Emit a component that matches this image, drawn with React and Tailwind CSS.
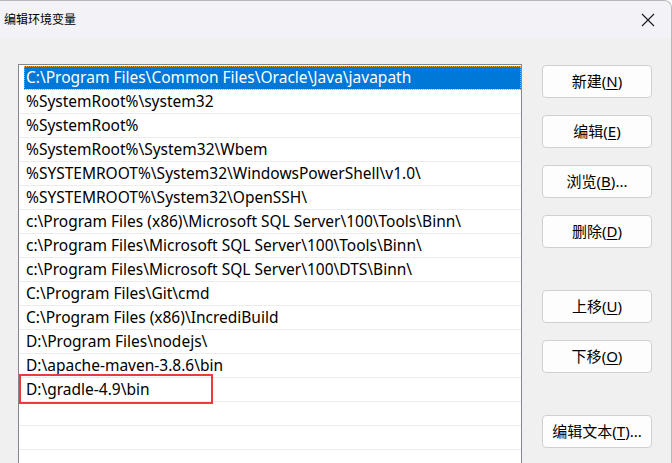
import React from "react";

const items = [
  "C:\\Program Files\\Common Files\\Oracle\\Java\\javapath",
  "%SystemRoot%\\system32",
  "%SystemRoot%",
  "%SystemRoot%\\System32\\Wbem",
  "%SYSTEMROOT%\\System32\\WindowsPowerShell\\v1.0\\",
  "%SYSTEMROOT%\\System32\\OpenSSH\\",
  "c:\\Program Files (x86)\\Microsoft SQL Server\\100\\Tools\\Binn\\",
  "c:\\Program Files\\Microsoft SQL Server\\100\\Tools\\Binn\\",
  "c:\\Program Files\\Microsoft SQL Server\\100\\DTS\\Binn\\",
  "C:\\Program Files\\Git\\cmd",
  "C:\\Program Files (x86)\\IncrediBuild",
  "D:\\Program Files\\nodejs\\",
  "D:\\apache-maven-3.8.6\\bin",
  "D:\\gradle-4.9\\bin",
  "",
  "",
  "",
];

function Btn({ label, u, after = "", className = "" }) {
  return (
    <button
      className={
        "flex h-[33px] w-[110px] items-center justify-center rounded-[4px] border border-[#d0d0d0] bg-[#fdfdfd] text-[15px] text-black " +
        className
      }
    >
      <span>
        {label}(<span className="underline underline-offset-2">{u}</span>){after}
      </span>
    </button>
  );
}

export default function App() {
  return (
    <div
      className="relative h-[463px] w-[672px] overflow-hidden rounded-tr-[8px] border-r border-t border-[#b8b8b8] bg-[#f0f0f0]"
      style={{ fontFamily: '"Noto Sans", "Noto Sans CJK SC", sans-serif' }}
    >
      {/* title bar */}
      <div className="flex h-[37px] items-center justify-between bg-[#f2f2f7] pl-[4px] pr-[16px]">
        <span className="text-[12px] text-black">编辑环境变量</span>
        <svg width="14" height="14" viewBox="0 0 14 14">
          <path d="M1 1 L13 13 M13 1 L1 13" stroke="#1a1a1a" strokeWidth="1.1" fill="none" />
        </svg>
      </div>

      <div className="flex pt-[26px]">
        {/* list */}
        <div className="relative ml-[18px] h-[420px] w-[504px] border border-[#828790] bg-white pt-[1px]">
          {items.map((t, i) => (
            <div
              key={i}
              className={
                "flex h-[24px] items-center whitespace-nowrap border-b border-[#ececec] text-[15.5px] leading-none " +
                (i === 0
                  ? "ml-[5px] bg-[#0078d7] pl-[2px] text-white outline outline-1 outline-dotted outline-[#f0a030] -outline-offset-1"
                  : "pl-[7px] text-black")
              }
            >
              {t}
            </div>
          ))}
          <div className="pointer-events-none absolute left-[0px] top-[310px] h-[30px] w-[194px] border-2 border-[#ec3b3b]" style={{ top: 309 }} />
        </div>

        {/* buttons */}
        <div className="ml-[20px] flex flex-col pt-[1px]">
          <Btn label="新建" u="N" />
          <Btn label="编辑" u="E" className="mt-[17px]" />
          <Btn label="浏览" u="B" after="..." className="mt-[17px]" />
          <Btn label="删除" u="D" className="mt-[17px]" />
          <Btn label="上移" u="U" className="mt-[42px]" />
          <Btn label="下移" u="O" className="mt-[17px]" />
          <Btn label="编辑文本" u="T" after="..." className="mt-[42px]" />
        </div>
      </div>
    </div>
  );
}
